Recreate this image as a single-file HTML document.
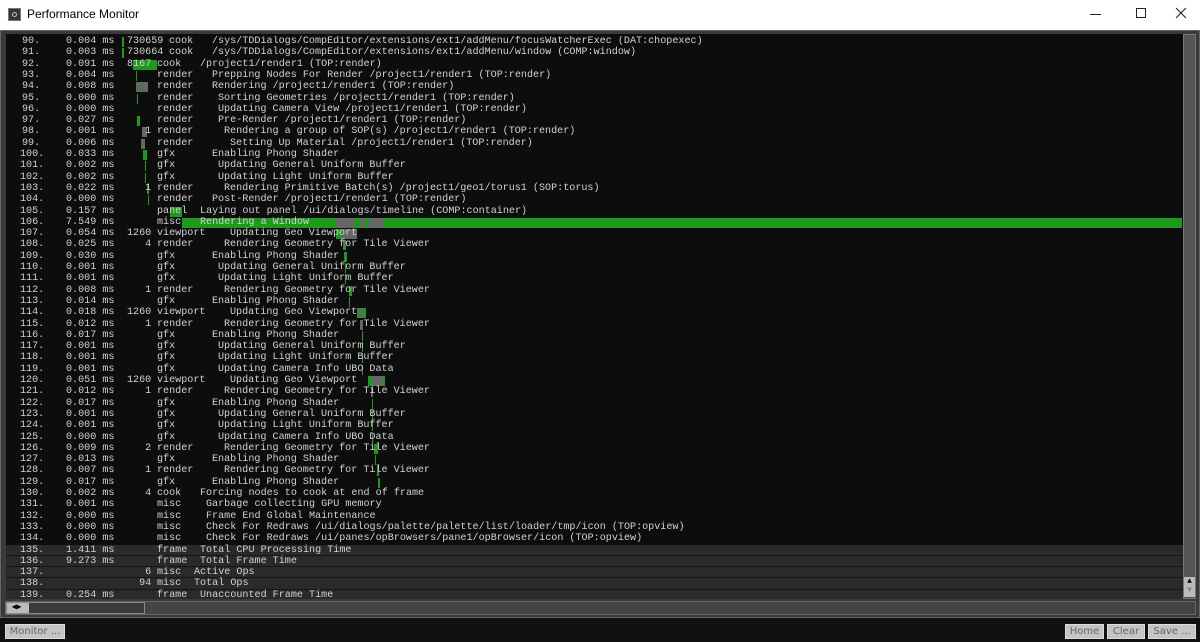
<!DOCTYPE html>
<html><head><meta charset="utf-8"><style>
*{margin:0;padding:0;box-sizing:border-box}
body{width:1200px;height:642px;background:#111;position:relative;overflow:hidden;font-family:"Liberation Mono",monospace;font-size:10.1px;color:#d2d2d2}
#title{position:absolute;left:0;top:0;width:1200px;height:30px;background:#fff;color:#000;font-family:"Liberation Sans",sans-serif;font-size:12px}
#frame{position:absolute;left:0;top:30px;width:1200px;height:588px;background:#3a3a3a;border:1px solid #666}
#content{position:absolute;left:6px;top:34px;width:1177px;height:565px;background:#0d0d0d;overflow:hidden}
.r{position:absolute;left:0;width:1177px;height:11.3px;line-height:11.3px;white-space:pre}
.r span{position:absolute;top:0}
.g{background:#2a2a2a;border-bottom:1px solid #161616}
.b{position:absolute;background:#1c9a1c}
.k{position:absolute;background:#666}
.btn{position:absolute;top:624px;height:15px;background:#c4c4c4;border:1px solid #dcdcdc;color:#666;font-family:"DejaVu Sans",sans-serif;font-size:10px;line-height:13px;text-align:center}
</style></head><body>
<div id="title">
<div style="position:absolute;left:8px;top:8px;width:13px;height:13px;background:#2f3a2f;border:1px solid #777"><div style="position:absolute;left:3px;top:3px;width:5px;height:5px;border:1px solid #bbb;border-radius:50%"></div></div>
<div style="position:absolute;left:27px;top:7px">Performance Monitor</div>
<div style="position:absolute;left:1090px;top:14px;width:11px;height:1px;background:#222"></div>
<div style="position:absolute;left:1136px;top:8px;width:10px;height:10px;border:1px solid #222"></div>
<svg style="position:absolute;left:1175px;top:7px" width="12" height="12"><path d="M1 1L11 11M11 1L1 11" stroke="#222" stroke-width="1.1"/></svg>
</div>
<div id="frame"></div>
<div id="content"></div>
<div id="rows" style="position:absolute;left:6px;top:36px;width:1177px;height:563px;overflow:hidden"></div>
<div style="position:absolute;left:1183px;top:34px;width:13px;height:565px;background:#555;border:1px solid #777"></div>
<div style="position:absolute;left:1184px;top:577px;width:11px;height:20px;background:#bbb;font-size:8px;color:#000;text-align:center;line-height:9px">▲<br><span style="color:#888">▼</span></div>
<div style="position:absolute;left:5px;top:601px;width:1191px;height:14px;background:#444;border:1px solid #666"></div>
<div style="position:absolute;left:6px;top:602px;width:139px;height:12px;background:#3b3b3b;border:1px solid #888"></div>
<div style="position:absolute;left:7px;top:603px;width:22px;height:10px;background:#bbb;font-size:8px;line-height:10px;color:#000">&nbsp;◀▶</div>
<div class="btn" style="left:5px;width:60px">Monitor ...</div>
<div class="btn" style="left:1065px;width:39px">Home</div>
<div class="btn" style="left:1107px;width:38px">Clear</div>
<div class="btn" style="left:1148px;width:48px">Save ...</div>
<script>
const D=[
[90,"0.004 ms","730659","cook",212,"/sys/TDDialogs/CompEditor/extensions/ext1/addMenu/focusWatcherExec (DAT:chopexec)",[[122,2,'b']]],
[91,"0.003 ms","730664","cook",212,"/sys/TDDialogs/CompEditor/extensions/ext1/addMenu/window (COMP:window)",[[122,2,'b']]],
[92,"0.091 ms","8167","cook",200,"/project1/render1 (TOP:render)",[[133,24,'b']]],
[93,"0.004 ms","","render",212,"Prepping Nodes For Render /project1/render1 (TOP:render)",[[136,1,'b']]],
[94,"0.008 ms","","render",212,"Rendering /project1/render1 (TOP:render)",[[136,12,'k'],[139,1,'b']]],
[95,"0.000 ms","","render",218,"Sorting Geometries /project1/render1 (TOP:render)",[[137,1,'b']]],
[96,"0.000 ms","","render",218,"Updating Camera View /project1/render1 (TOP:render)",[]],
[97,"0.027 ms","","render",218,"Pre-Render /project1/render1 (TOP:render)",[[137,3,'b']]],
[98,"0.001 ms","1","render",224,"Rendering a group of SOP(s) /project1/render1 (TOP:render)",[[142,5,'k']]],
[99,"0.006 ms","","render",230,"Setting Up Material /project1/render1 (TOP:render)",[[141,4,'k']]],
[100,"0.033 ms","","gfx",212,"Enabling Phong Shader",[[143,4,'b']]],
[101,"0.002 ms","","gfx",218,"Updating General Uniform Buffer",[[145,1,'b']]],
[102,"0.002 ms","","gfx",218,"Updating Light Uniform Buffer",[[145,1,'b']]],
[103,"0.022 ms","1","render",224,"Rendering Primitive Batch(s) /project1/geo1/torus1 (SOP:torus)",[[147,2,'b']]],
[104,"0.000 ms","","render",212,"Post-Render /project1/render1 (TOP:render)",[[148,1,'b']]],
[105,"0.157 ms","","panel",200,"Laying out panel /ui/dialogs/timeline (COMP:container)",[[170,12,'b']]],
[106,"7.549 ms","","misc",200,"Rendering a Window",[[182,1000,'b'],[336,19,'k'],[361,4,'k'],[369,15,'k']]],
[107,"0.054 ms","1260","viewport",230,"Updating Geo Viewport",[[336,7,'b'],[342,15,'k']]],
[108,"0.025 ms","4","render",224,"Rendering Geometry for Tile Viewer",[[343,3,'k'],[344,1,'b']]],
[109,"0.030 ms","","gfx",212,"Enabling Phong Shader",[[344,3,'b']]],
[110,"0.001 ms","","gfx",218,"Updating General Uniform Buffer",[[345,1,'b']]],
[111,"0.001 ms","","gfx",218,"Updating Light Uniform Buffer",[[345,1,'b']]],
[112,"0.008 ms","1","render",224,"Rendering Geometry for Tile Viewer",[[349,3,'b']]],
[113,"0.014 ms","","gfx",212,"Enabling Phong Shader",[[349,1,'b']]],
[114,"0.018 ms","1260","viewport",230,"Updating Geo Viewport",[[357,9,'b'],[359,4,'k']]],
[115,"0.012 ms","1","render",224,"Rendering Geometry for Tile Viewer",[[360,3,'k']]],
[116,"0.017 ms","","gfx",212,"Enabling Phong Shader",[[362,1,'b']]],
[117,"0.001 ms","","gfx",218,"Updating General Uniform Buffer",[[362,1,'b']]],
[118,"0.001 ms","","gfx",218,"Updating Light Uniform Buffer",[[362,1,'b']]],
[119,"0.001 ms","","gfx",218,"Updating Camera Info UBO Data",[[362,1,'b']]],
[120,"0.051 ms","1260","viewport",230,"Updating Geo Viewport",[[368,17,'b'],[372,11,'k']]],
[121,"0.012 ms","1","render",224,"Rendering Geometry for Tile Viewer",[[371,2,'k']]],
[122,"0.017 ms","","gfx",212,"Enabling Phong Shader",[[372,1,'b']]],
[123,"0.001 ms","","gfx",218,"Updating General Uniform Buffer",[[372,1,'b']]],
[124,"0.001 ms","","gfx",218,"Updating Light Uniform Buffer",[[372,1,'b']]],
[125,"0.000 ms","","gfx",218,"Updating Camera Info UBO Data",[[372,1,'b']]],
[126,"0.009 ms","2","render",224,"Rendering Geometry for Tile Viewer",[[374,4,'b']]],
[127,"0.013 ms","","gfx",212,"Enabling Phong Shader",[[375,1,'b']]],
[128,"0.007 ms","1","render",224,"Rendering Geometry for Tile Viewer",[[377,2,'b']]],
[129,"0.017 ms","","gfx",212,"Enabling Phong Shader",[[378,2,'b']]],
[130,"0.002 ms","4","cook",200,"Forcing nodes to cook at end of frame",[]],
[131,"0.001 ms","","misc",206,"Garbage collecting GPU memory",[]],
[132,"0.000 ms","","misc",206,"Frame End Global Maintenance",[]],
[133,"0.000 ms","","misc",206,"Check For Redraws /ui/dialogs/palette/palette/list/loader/tmp/icon (TOP:opview)",[]],
[134,"0.000 ms","","misc",206,"Check For Redraws /ui/panes/opBrowsers/pane1/opBrowser/icon (TOP:opview)",[]],
[135,"1.411 ms","","frame",200,"Total CPU Processing Time",[],1],
[136,"9.273 ms","","frame",200,"Total Frame Time",[],1],
[137,"","6","misc",194,"Active Ops",[],1],
[138,"","94","misc",194,"Total Ops",[],1],
[139,"0.254 ms","","frame",200,"Unaccounted Frame Time",[],1]];
let h='';
D.forEach((d,i)=>{
 const y=(i*11.3).toFixed(2);
 let bars=d[6].map(b=>`<div class="${b[2]}" style="left:${b[0]-6}px;top:1px;width:${b[1]}px;height:10px"></div>`).join('');
 const cnt=d[2].padStart(4,' ');
 const tx=d[2].length>4?169:157;
 h+=`<div class="r${d[7]?' g':''}" style="top:${y}px">${bars}<span style="left:${(d[0]>=100?20:22)-6}px">${d[0]}.</span><span style="left:60px">${d[1]}</span><span style="left:121px">${d[2].length>4?d[2]:cnt}</span><span style="left:${tx-6}px">${d[3]}</span><span style="left:${d[4]-6}px">${d[5]}</span></div>`;
});
document.getElementById('rows').innerHTML=h;
</script>
</body></html>
